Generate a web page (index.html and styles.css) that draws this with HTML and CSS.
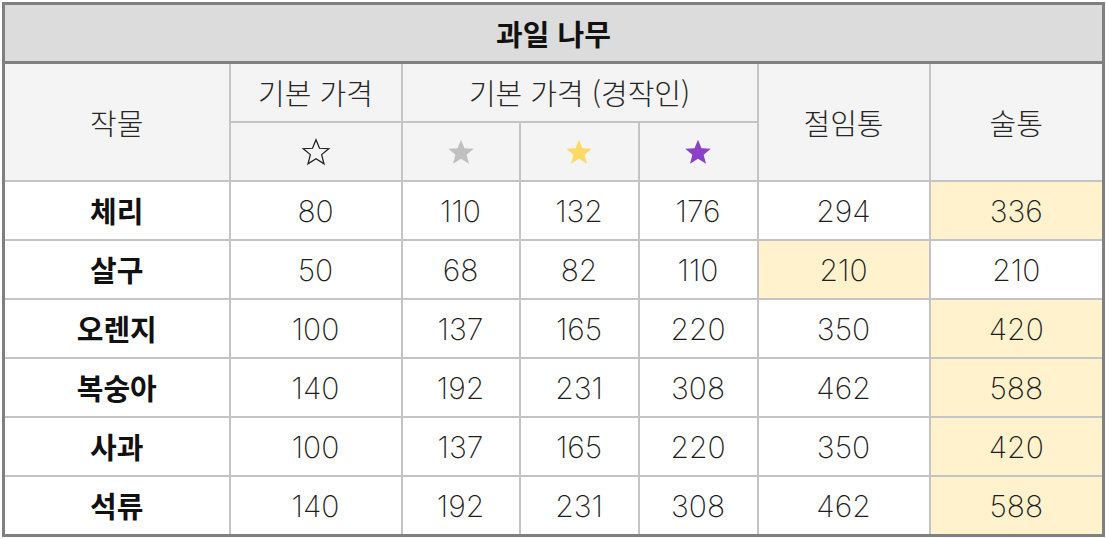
FILE: index.html
```html
<!DOCTYPE html>
<html lang="ko">
<head>
<meta charset="utf-8">
<link rel="stylesheet" href="styles.css">
</head>
<body>
<table class="fruit">
  <colgroup>
    <col class="c1"><col class="c2"><col class="c3"><col class="c4"><col class="c5"><col class="c6"><col class="c7">
  </colgroup>
  <thead>
    <tr><th colspan="7" class="title">과일 나무</th></tr>
    <tr class="sub">
      <th rowspan="2">작물</th>
      <th>기본 가격</th>
      <th colspan="3">기본 가격 (경작인)</th>
      <th rowspan="2">절임통</th>
      <th rowspan="2">술통</th>
    </tr>
    <tr class="sub">
      <th><svg class="star" viewBox="0 0 24 24"><polygon class="outline" points="12,2.2 14.8,9 22.2,9.4 16.5,14.1 18.4,21.4 12,17.3 5.6,21.4 7.5,14.1 1.8,9.4 9.2,9"/></svg></th>
      <th><svg class="star" viewBox="0 0 24 24"><polygon class="silver" points="12,2.2 14.8,9 22.2,9.4 16.5,14.1 18.4,21.4 12,17.3 5.6,21.4 7.5,14.1 1.8,9.4 9.2,9"/></svg></th>
      <th><svg class="star" viewBox="0 0 24 24"><polygon class="gold" points="12,2.2 14.8,9 22.2,9.4 16.5,14.1 18.4,21.4 12,17.3 5.6,21.4 7.5,14.1 1.8,9.4 9.2,9"/></svg></th>
      <th><svg class="star" viewBox="0 0 24 24"><polygon class="iridium" points="12,2.2 14.8,9 22.2,9.4 16.5,14.1 18.4,21.4 12,17.3 5.6,21.4 7.5,14.1 1.8,9.4 9.2,9"/></svg></th>
    </tr>
  </thead>
  <tbody>
    <tr><th>체리</th><td>80</td><td>110</td><td>132</td><td>176</td><td>294</td><td class="hl">336</td></tr>
    <tr><th>살구</th><td>50</td><td>68</td><td>82</td><td>110</td><td class="hl">210</td><td>210</td></tr>
    <tr><th>오렌지</th><td>100</td><td>137</td><td>165</td><td>220</td><td>350</td><td class="hl">420</td></tr>
    <tr><th>복숭아</th><td>140</td><td>192</td><td>231</td><td>308</td><td>462</td><td class="hl">588</td></tr>
    <tr><th>사과</th><td>100</td><td>137</td><td>165</td><td>220</td><td>350</td><td class="hl">420</td></tr>
    <tr><th>석류</th><td>140</td><td>192</td><td>231</td><td>308</td><td>462</td><td class="hl">588</td></tr>
  </tbody>
</table>
</body>
</html>
```
FILE: styles.css
```css
html, body {
  margin: 0;
  padding: 0;
  background: #ffffff;
}
body {
  padding: 2px 0 0 2px;
}
.fruit {
  border-collapse: collapse;
  table-layout: fixed;
  width: 1100px;
  border: 3px solid #808080;
  font-family: Inter, "Noto Sans CJK KR", sans-serif;
  font-weight: 230;
  font-size: 30px;
  color: #1e1e1e;
}
.c1 { width: 226px; }
.c2 { width: 172px; }
.c3 { width: 118px; }
.c4 { width: 119px; }
.c5 { width: 119px; }
.c6 { width: 172px; }
.c7 { width: 174px; }
.fruit th,
.fruit td {
  border: 2px solid #c4c4c4;
  text-align: center;
  vertical-align: middle;
  padding: 0;
  height: 57px;
  line-height: 1;
}
.fruit th {
  font-weight: 300;
  font-size: 29px;
  color: #262626;
  font-family: "Noto Sans CJK KR Light", "Noto Sans CJK KR DemiLight", "Noto Sans CJK KR", sans-serif;
}
.fruit .title {
  background: #dcdcdc;
  font-weight: 700;
  font-family: "Noto Sans CJK KR", sans-serif;
  color: #111111;
  font-size: 29px;
  height: 56px;
  border-bottom: 3px solid #808080;
}
.fruit .sub th {
  background: #f4f4f4;
}
.fruit tbody th {
  font-weight: 700;
  font-family: "Noto Sans CJK KR", sans-serif;
  color: #111111;
  background: #ffffff;
}
.fruit td.hl {
  background: #fff2cc;
}
.star {
  display: block;
  width: 30px;
  height: 30px;
  margin: 0 auto;
}
.outline {
  fill: none;
  stroke: #1e1e1e;
  stroke-width: 1;
  stroke-linejoin: miter;
}
.silver { fill: #c0c0c0; }
.gold { fill: #ffd966; }
.iridium { fill: #8c3fc8; }
```
